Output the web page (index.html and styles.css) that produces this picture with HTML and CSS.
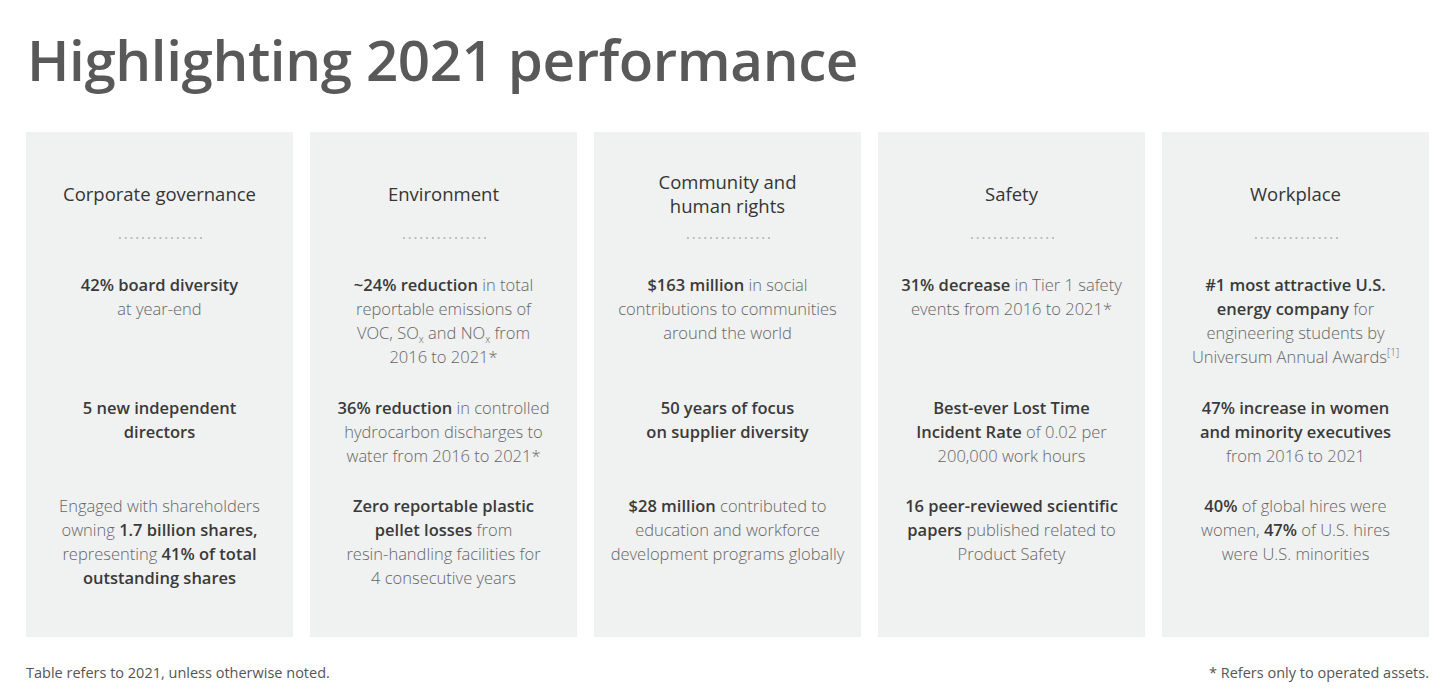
FILE: index.html
```html
<!DOCTYPE html>
<html lang="en">
<head>
<meta charset="utf-8">
<title>Highlighting 2021 performance</title>
<link rel="stylesheet" href="styles.css">
</head>
<body>
<main class="page">
  <h1 class="title">Highlighting 2021 performance</h1>
  <section class="cards">
    <article class="card">
      <h2 class="card-head">Corporate governance</h2>
      <div class="dots"></div>
      <p class="item item1"><b>42% board diversity</b><br>at year-end</p>
      <p class="item item2"><b>5 new independent<br>directors</b></p>
      <p class="item item3">Engaged with shareholders<br>owning <b>1.7 billion shares,</b><br>representing <b>41% of total</b><br><b>outstanding shares</b></p>
    </article>
    <article class="card">
      <h2 class="card-head">Environment</h2>
      <div class="dots"></div>
      <p class="item item1"><b>~24% reduction</b> in total<br>reportable emissions of<br>VOC, SO<sub>x</sub> and NO<sub>x</sub> from<br>2016 to 2021*</p>
      <p class="item item2"><b>36% reduction</b> in controlled<br>hydrocarbon discharges to<br>water from 2016 to 2021*</p>
      <p class="item item3"><b>Zero reportable plastic</b><br><b>pellet losses</b> from<br>resin-handling facilities for<br>4 consecutive years</p>
    </article>
    <article class="card">
      <h2 class="card-head">Community and<br>human rights</h2>
      <div class="dots"></div>
      <p class="item item1"><b>$163 million</b> in social<br>contributions to communities<br>around the world</p>
      <p class="item item2"><b>50 years of focus<br>on supplier diversity</b></p>
      <p class="item item3"><b>$28 million</b> contributed to<br>education and workforce<br>development programs globally</p>
    </article>
    <article class="card">
      <h2 class="card-head">Safety</h2>
      <div class="dots"></div>
      <p class="item item1"><b>31% decrease</b> in Tier 1 safety<br>events from 2016 to 2021*</p>
      <p class="item item2"><b>Best-ever Lost Time</b><br><b>Incident Rate</b> of 0.02 per<br>200,000 work hours</p>
      <p class="item item3"><b>16 peer-reviewed scientific</b><br><b>papers</b> published related to<br>Product Safety</p>
    </article>
    <article class="card">
      <h2 class="card-head">Workplace</h2>
      <div class="dots"></div>
      <p class="item item1"><b>#1 most attractive U.S.</b><br><b>energy company</b> for<br>engineering students by<br>Universum Annual Awards<sup>[1]</sup></p>
      <p class="item item2"><b>47% increase in women</b><br><b>and minority executives</b><br>from 2016 to 2021</p>
      <p class="item item3"><b>40%</b> of global hires were<br>women, <b>47%</b> of U.S. hires<br>were U.S. minorities</p>
    </article>
  </section>
  <footer class="notes">
    <span>Table refers to 2021, unless otherwise noted.</span>
    <span>* Refers only to operated assets.</span>
  </footer>
</main>
</body>
</html>
```

FILE: styles.css
```css
html, body {
  margin: 0;
  padding: 0;
  background: #ffffff;
}
body {
  font-family: "Open Sans", "Noto Sans", sans-serif;
  color: #666666;
}
.page {
  width: 1454px;
  height: 698px;
  box-sizing: border-box;
  padding: 22px 25px 0 26px;
}
.title {
  margin: 0 0 0 1px;
  font-size: 56.5px;
  line-height: 76px;
  font-weight: 600;
  color: #595959;
  letter-spacing: -0.4px;
}
.cards {
  margin-top: 34px;
  display: grid;
  grid-template-columns: repeat(5, 267px);
  column-gap: 17px;
}
.card {
  background: #f0f1f1;
  height: 505px;
  box-sizing: border-box;
  padding: 38px 6px 0;
  display: flex;
  flex-direction: column;
  align-items: center;
  text-align: center;
}
.card-head {
  margin: 0;
  height: 48px;
  display: flex;
  align-items: center;
  justify-content: center;
  font-size: 18.5px;
  line-height: 24px;
  font-weight: 500;
  color: #353535;
}
.dots {
  margin-top: 19px;
  width: 86px;
  height: 2px;
  background-image: radial-gradient(circle, #bdbdbd 0.9px, transparent 1.1px);
  background-size: 5.8px 2px;
  background-repeat: repeat-x;
}
.item {
  margin: 0;
  font-size: 16.5px;
  line-height: 24px;
  font-weight: 300;
  color: #666666;
  width: 100%;
  white-space: nowrap;
}
.item b {
  font-weight: 600;
  color: #3a3a3a;
}
.item1 {
  margin-top: 34px;
  min-height: 96px;
}
.item2 {
  margin-top: 27px;
  min-height: 72px;
}
.item3 {
  margin-top: 26px;
}
sub, sup {
  font-size: 10px;
  line-height: 0;
  position: relative;
  vertical-align: baseline;
}
sub {
  top: 4px;
}
sup {
  top: -7px;
}
.notes {
  margin-top: 26px;
  display: flex;
  justify-content: space-between;
  font-size: 14.5px;
  line-height: 20px;
  font-weight: 400;
  color: #555555;
}
```
